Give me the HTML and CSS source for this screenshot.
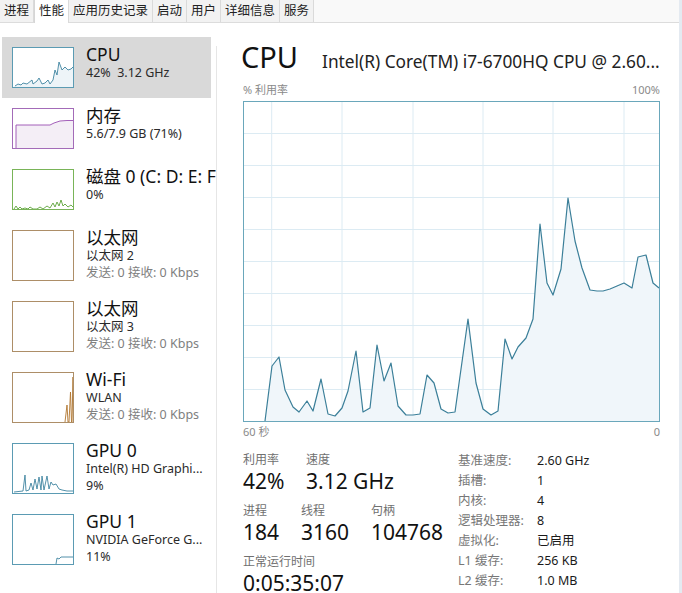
FILE: index.html
```html
<!DOCTYPE html>
<html lang="zh-CN">
<head>
    <meta charset="UTF-8">
    <title>任务管理器 - 性能</title>
    <link rel="stylesheet" href="styles.css">
</head>
<body>
<div class="ventana">
    <nav class="pestanas">
        <div class="pestana">进程</div>
        <div class="pestana activa">性能</div>
        <div class="pestana">应用历史记录</div>
        <div class="pestana">启动</div>
        <div class="pestana">用户</div>
        <div class="pestana">详细信息</div>
        <div class="pestana">服务</div>
    </nav>

    <div class="cuerpo">
        <aside class="lateral">
            <div class="item seleccionado">
                <svg class="mini azul" width="62" height="41" viewBox="0 0 62 41">
                    <polygon class="relleno" points="1,40 3,39 6,37 9,38 11,36 15,37 20,33 21,37 25,34 27,31 30,37 33,36 36,33 38,37 41,33 43,23 45,28 47,15 50,23 53,20 56,23 59,22 61,20 61,40"/>
                    <polyline class="linea" points="3,39 6,37 9,38 11,36 15,37 20,33 21,37 25,34 27,31 30,37 33,36 36,33 38,37 41,33 43,23 45,28 47,15 50,23 53,20 56,23 59,22 61,20"/>
                    <rect class="marco" x="0.5" y="0.5" width="61" height="40"/>
                </svg>
                <div class="texto">
                    <div class="titulo">CPU</div>
                    <div class="sub">42%&nbsp; 3.12 GHz</div>
                </div>
            </div>

            <div class="item">
                <svg class="mini morado" width="62" height="41" viewBox="0 0 62 41">
                    <polygon class="relleno" points="4,40 4,17 38,17 42,15 48,13 55,12.5 61,12.5 61,40"/>
                    <polyline class="linea" points="4,40 4,17 38,17 42,15 48,13 55,12.5 61,12.5"/>
                    <rect class="marco" x="0.5" y="0.5" width="61" height="40"/>
                </svg>
                <div class="texto">
                    <div class="titulo">内存</div>
                    <div class="sub">5.6/7.9 GB (71%)</div>
                </div>
            </div>

            <div class="item">
                <svg class="mini verde" width="62" height="41" viewBox="0 0 62 41">
                    <polyline class="linea" points="2,40 4,37 6,40 8,38 10,40 13,39 16,40 18,38 21,40 25,40 28,38 31,40 35,37 38,39 41,34 43,38 45,33 47,37 49,31 51,37 53,35 56,38 59,36 61,38"/>
                    <rect class="marco" x="0.5" y="0.5" width="61" height="40"/>
                </svg>
                <div class="texto">
                    <div class="titulo">磁盘 0 (C: D: E: F:</div>
                    <div class="sub">0%</div>
                </div>
            </div>

            <div class="item alto">
                <svg class="mini cafe" width="62" height="51" viewBox="0 0 62 51">
                    <rect class="marco" x="0.5" y="0.5" width="61" height="50"/>
                </svg>
                <div class="texto">
                    <div class="titulo">以太网</div>
                    <div class="sub">以太网 2</div>
                    <div class="sub gris">发送: 0 接收: 0 Kbps</div>
                </div>
            </div>

            <div class="item alto">
                <svg class="mini cafe" width="62" height="51" viewBox="0 0 62 51">
                    <rect class="marco" x="0.5" y="0.5" width="61" height="50"/>
                </svg>
                <div class="texto">
                    <div class="titulo">以太网</div>
                    <div class="sub">以太网 3</div>
                    <div class="sub gris">发送: 0 接收: 0 Kbps</div>
                </div>
            </div>

            <div class="item alto">
                <svg class="mini cafe" width="62" height="51" viewBox="0 0 62 51">
                    <polyline class="linea" points="53,50 55,33 56,50 57,50 58.5,20 59.5,50 60,50 61,5 61.5,50"/>
                    <rect class="marco" x="0.5" y="0.5" width="61" height="50"/>
                </svg>
                <div class="texto">
                    <div class="titulo">Wi-Fi</div>
                    <div class="sub">WLAN</div>
                    <div class="sub gris">发送: 0 接收: 0 Kbps</div>
                </div>
            </div>

            <div class="item alto">
                <svg class="mini azul" width="62" height="51" viewBox="0 0 62 51">
                    <polyline class="linea" points="2,49 11,48 13,32 14,48 17,47 19,40 21,47 23,36 25,46 27,34 29,47 30,33 32,47 35,33 37,46 39,39 41,42 44,41 47,46 50,47 55,48 61,48"/>
                    <rect class="marco" x="0.5" y="0.5" width="61" height="50"/>
                </svg>
                <div class="texto">
                    <div class="titulo">GPU 0</div>
                    <div class="sub">Intel(R) HD Graphi...</div>
                    <div class="sub">9%</div>
                </div>
            </div>

            <div class="item alto">
                <svg class="mini azul" width="62" height="51" viewBox="0 0 62 51">
                    <polyline class="linea" points="44,50 45,44 47,45 49,43 55,43 61,43"/>
                    <rect class="marco" x="0.5" y="0.5" width="61" height="50"/>
                </svg>
                <div class="texto">
                    <div class="titulo">GPU 1</div>
                    <div class="sub">NVIDIA GeForce G...</div>
                    <div class="sub">11%</div>
                </div>
            </div>
        </aside>

        <div class="separador"></div>

        <main class="panel">
            <div class="cabecera">
                <span class="nombre">CPU</span>
                <span class="modelo">Intel(R) Core(TM) i7-6700HQ CPU @ 2.60...</span>
            </div>
            <div class="eje">
                <span>% 利用率</span>
                <span>100%</span>
            </div>

            <svg class="grafica" width="417" height="321" viewBox="0 0 417 321">
                <g class="rejilla">
                    <line x1="28.7" y1="0" x2="28.7" y2="321"/>
                    <line x1="99" y1="0" x2="99" y2="321"/>
                    <line x1="170" y1="0" x2="170" y2="321"/>
                    <line x1="240" y1="0" x2="240" y2="321"/>
                    <line x1="310" y1="0" x2="310" y2="321"/>
                    <line x1="381" y1="0" x2="381" y2="321"/>
                    <line x1="0" y1="32.5" x2="417" y2="32.5"/>
                    <line x1="0" y1="64.5" x2="417" y2="64.5"/>
                    <line x1="0" y1="96.5" x2="417" y2="96.5"/>
                    <line x1="0" y1="128.5" x2="417" y2="128.5"/>
                    <line x1="0" y1="160.5" x2="417" y2="160.5"/>
                    <line x1="0" y1="192.5" x2="417" y2="192.5"/>
                    <line x1="0" y1="224.5" x2="417" y2="224.5"/>
                    <line x1="0" y1="256.5" x2="417" y2="256.5"/>
                    <line x1="0" y1="288.5" x2="417" y2="288.5"/>
                </g>
                <polygon class="area" points="22,320 29,265 36,256 42,289 50,306 56,311 64,300 70,310 78,278 85,313 92,315 99,307 105,290 113,250 120,311 127,307 134,244 141,280 148,262 155,305 163,314 170,314 177,313 184,274 191,282 198,308 205,312 212,311 225,218 233,282 240,308 248,314 255,310 262,238 269,258 275,246 283,237 290,218 297,123 304,182 310,194 318,168 325,97 332,140 339,167 347,189 354,190 360,190 367,188 374,185 381,182 389,187 395,156 403,154 410,182 416,187 416,320"/>
                <polyline class="trazo" points="22,320 29,265 36,256 42,289 50,306 56,311 64,300 70,310 78,278 85,313 92,315 99,307 105,290 113,250 120,311 127,307 134,244 141,280 148,262 155,305 163,314 170,314 177,313 184,274 191,282 198,308 205,312 212,311 225,218 233,282 240,308 248,314 255,310 262,238 269,258 275,246 283,237 290,218 297,123 304,182 310,194 318,168 325,97 332,140 339,167 347,189 354,190 360,190 367,188 374,185 381,182 389,187 395,156 403,154 410,182 416,187"/>
                <rect class="borde" x="0.5" y="0.5" width="416" height="320"/>
            </svg>

            <div class="eje abajo">
                <span>60 秒</span>
                <span>0</span>
            </div>

            <div class="estadisticas">
                <div class="grupo">
                    <div class="fila">
                        <div class="dato ancho-1">
                            <div class="etiqueta">利用率</div>
                            <div class="valor">42%</div>
                        </div>
                        <div class="dato">
                            <div class="etiqueta">速度</div>
                            <div class="valor">3.12 GHz</div>
                        </div>
                    </div>
                    <div class="fila">
                        <div class="dato ancho-2">
                            <div class="etiqueta">进程</div>
                            <div class="valor">184</div>
                        </div>
                        <div class="dato ancho-3">
                            <div class="etiqueta">线程</div>
                            <div class="valor">3160</div>
                        </div>
                        <div class="dato">
                            <div class="etiqueta">句柄</div>
                            <div class="valor">104768</div>
                        </div>
                    </div>
                    <div class="fila">
                        <div class="dato">
                            <div class="etiqueta">正常运行时间</div>
                            <div class="valor">0:05:35:07</div>
                        </div>
                    </div>
                </div>

                <dl class="tabla">
                    <dt>基准速度:</dt><dd>2.60 GHz</dd>
                    <dt>插槽:</dt><dd>1</dd>
                    <dt>内核:</dt><dd>4</dd>
                    <dt>逻辑处理器:</dt><dd>8</dd>
                    <dt>虚拟化:</dt><dd>已启用</dd>
                    <dt>L1 缓存:</dt><dd>256 KB</dd>
                    <dt>L2 缓存:</dt><dd>1.0 MB</dd>
                </dl>
            </div>
        </main>
    </div>
</div>
</body>
</html>
```

FILE: styles.css
```css
body {
    margin: 0;
    background-color: #fff;
    font-family: "Noto Sans", "Noto Sans CJK SC", sans-serif;
    color: #1a1a1a;
    overflow: hidden;
}
.ventana {
    width: 679px;
    height: 593px;
    border-right: 3px solid #e4eaf1;
    overflow: hidden;
}

/* Pestañas de arriba */
.pestanas {
    display: flex;
    height: 22px;
    background-color: #f9f9f9;
    border-bottom: 1px solid #dcdcdc;
}
.pestana {
    padding: 0 4px;
    font-size: 12.5px;
    line-height: 22px;
    color: #222;
    background-color: #f2f2f2;
    border-right: 1px solid #dadada;
    white-space: nowrap;
}
.pestana.activa {
    background-color: #fff;
    border-left: 1px solid #d6d6d6;
    height: 23px;
}

.cuerpo {
    display: flex;
}

/* Lista de la izquierda */
.lateral {
    width: 214px;
    margin-left: 2px;
    padding-top: 14px;
    overflow: hidden;
    flex-shrink: 0;
}
.item {
    display: flex;
    width: 209px;
    height: 61px;
    box-sizing: border-box;
    padding: 10px 0 0 10px;
    white-space: nowrap;
}
.item.alto {
    height: 71px;
}
.item.seleccionado {
    background-color: #d9d9d9;
}
.mini {
    flex-shrink: 0;
    background-color: #fff;
}
.mini .marco {
    fill: none;
    stroke-width: 1;
}
.mini .linea {
    fill: none;
    stroke-width: 0.9;
}
.azul .marco { stroke: #5b9bb3; }
.azul .linea { stroke: #3f84a0; }
.azul .relleno { fill: #edf4f8; }
.morado .marco { stroke: #a36bb8; }
.morado .linea { stroke: #9a4fb2; }
.morado .relleno { fill: #f4eef6; }
.verde .marco { stroke: #79b458; }
.verde .linea { stroke: #5ea43a; }
.cafe .marco { stroke: #ad8e67; }
.cafe .linea { stroke: #b1762f; }

.texto {
    margin: -4px 0 0 12px;
}
.titulo {
    font-size: 17.5px;
    line-height: 22px;
    color: #111;
}
.sub {
    font-size: 12.5px;
    line-height: 16.5px;
    color: #2a2a2a;
}
.sub.gris {
    color: #808080;
}

.separador {
    width: 1px;
    margin: 23px 4px 0 0;
    height: 570px;
    background-color: #e6e6e6;
    flex-shrink: 0;
}

/* Panel principal */
.panel {
    flex: 1;
    padding: 17px 0 0 22px;
}
.cabecera {
    display: flex;
    align-items: baseline;
    gap: 24px;
    height: 34px;
    white-space: nowrap;
}
.nombre {
    font-size: 29px;
    line-height: 34px;
    margin-left: -2px;
    color: #111;
}
.modelo {
    font-size: 17.3px;
    color: #222;
}
.eje {
    display: flex;
    justify-content: space-between;
    width: 417px;
    margin-top: 8px;
    font-size: 11px;
    line-height: 16px;
    color: #8a8a8a;
}
.eje.abajo {
    margin-top: 2px;
}
.grafica {
    display: block;
    margin-top: 3px;
}
.rejilla line {
    stroke: #dcebf3;
    stroke-width: 1;
}
.area {
    fill: #f0f6fa;
}
.trazo {
    fill: none;
    stroke: #3b7f99;
    stroke-width: 1.2;
    stroke-linejoin: round;
}
.borde {
    fill: none;
    stroke: #6aa7bb;
    stroke-width: 1;
}

/* Números de abajo */
.estadisticas {
    display: flex;
    margin-top: 11px;
}
.grupo {
    width: 215px;
    display: flex;
    flex-direction: column;
    gap: 8px;
}
.fila {
    display: flex;
}
.dato.ancho-1 { width: 63px; }
.dato.ancho-2 { width: 58px; }
.dato.ancho-3 { width: 70px; }
.etiqueta {
    font-size: 12px;
    line-height: 17px;
    color: #707070;
}
.valor {
    font-size: 21px;
    line-height: 26px;
    color: #111;
}
.tabla {
    display: grid;
    grid-template-columns: 79px auto;
    grid-auto-rows: 20px;
    margin: 0;
    font-size: 12.5px;
    line-height: 20px;
}
.tabla dt {
    color: #777;
}
.tabla dd {
    margin: 0;
    color: #1a1a1a;
}
```
